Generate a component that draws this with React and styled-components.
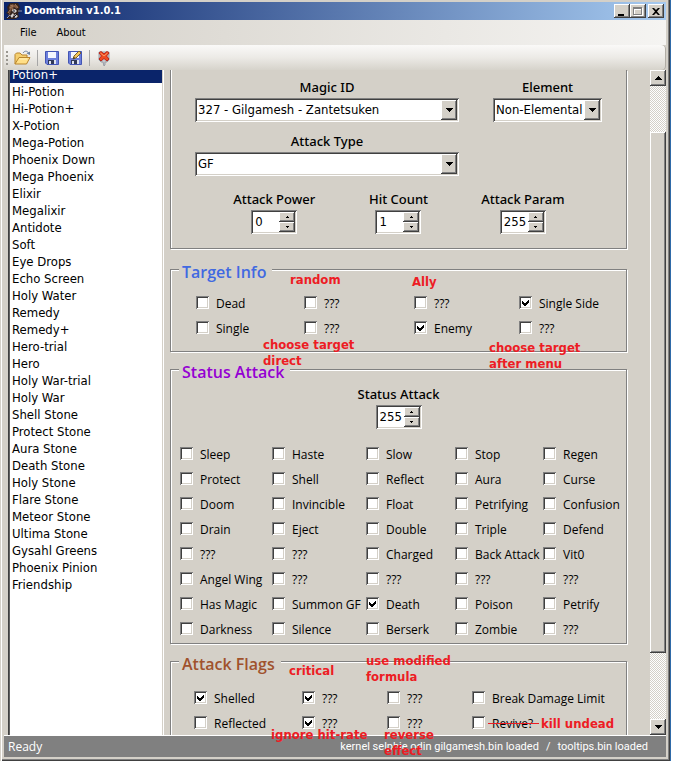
import React, { useState } from "react";
import styled, { createGlobalStyle, css } from "styled-components";

const face = "#d4d0c8";
const sunken = css`
  box-shadow: inset 1px 1px #808080, inset -1px -1px #fff, inset 2px 2px #404040, inset -2px -2px ${face};
`;
const raised = css`
  background: ${face};
  box-shadow: inset -1px -1px #404040, inset 1px 1px #fff, inset -2px -2px #808080;
`;
const labelFont = `"Open Sans", "Noto Sans", sans-serif`;
const fieldFont = `"DejaVu Sans Condensed", "DejaVu Sans", sans-serif`;

const GlobalStyle = createGlobalStyle`
  * { box-sizing: border-box; }
  body { margin: 0; background: #fff; color: #000; font: 12px/18px ${labelFont}; }
  button, input, select { font: inherit; color: inherit; border: 0; padding: 0; margin: 0; border-radius: 0; }
`;

const Page = styled.div`
  position: relative;
  display: flex;
  height: 100vh;
  min-height: 400px;
  padding: 0 5px 5px 0;
  overflow: hidden;
`;
const Window = styled.div`
  flex: 1;
  min-width: 0;
  display: flex;
  flex-direction: column;
  padding: 2px 4px 4px 4px;
  background: ${face};
  border-right: 1px solid #2f6aa8;
  box-shadow: inset 1px 0 ${face}, inset 2px 0 #fff, inset -1px -1px #404040, inset -2px -2px #808080;
`;
const TitleBar = styled.header`
  display: flex;
  align-items: center;
  height: 18px;
  padding: 0 2px;
  flex: none;
  background: linear-gradient(90deg, #0a246a, #a6caf0);
`;
const Title = styled.h1`
  flex: 1;
  margin: 0 0 0 2px;
  color: #fff;
  font: bold 11px/18px ${fieldFont};
`;
const CaptionButton = styled.button`
  ${raised}
  display: grid;
  place-items: center;
  width: 16px;
  height: 14px;
  margin-left: ${(p) => (p.$apart ? "2px" : "0")};
`;
const MenuBar = styled.nav`
  display: flex;
  align-items: center;
  gap: 20px;
  height: 25px;
  padding: 0 16px;
  flex: none;
  background: linear-gradient(90deg, ${face}, #f5f4f2);
`;
const MenuItem = styled.button`
  background: none;
  font: 11px/22px ${fieldFont};
`;
const ToolBar = styled.div`
  display: flex;
  align-items: center;
  height: 25px;
  padding: 0 2px;
  flex: none;
  border-radius: 0 4px 4px 4px;
  background: linear-gradient(#faf9f8, #eceae6 50%, #d6d3cb);
  box-shadow: inset -1px 0 #b0aca4;
`;
const Grip = styled.span`
  width: 2px;
  height: 14px;
  margin-right: 3px;
  background: repeating-linear-gradient(#9a9790 0 2px, transparent 2px 4px);
`;
const ToolButton = styled.button`
  display: grid;
  place-items: center;
  width: 23px;
  height: 22px;
  background: none;
`;
const ToolSeparator = styled.span`
  width: 1px;
  height: 16px;
  margin: 0 2px 0 3px;
  background: #a6a6a6;
`;
const Body = styled.div`
  flex: 1;
  min-height: 0;
  display: flex;
  overflow: hidden;
  border-bottom: 1px solid #fff;
`;
const ListFrame = styled.div`
  flex: none;
  width: 156px;
  margin: 0 6px 0 4px;
  overflow: hidden;
  background: #fff;
  border-left: 1px solid #404040;
  border-right: 1px solid #fff;
  box-shadow: inset 1px 0 #606060, inset -1px 0 ${face};
`;
const List = styled.ul`
  list-style: none;
  margin: -4px 1px 0;
  padding: 0;
  font: 13px/17px ${fieldFont};
`;
const Item = styled.li`
  padding-left: 2px;
  cursor: default;
  color: ${(p) => (p.$selected ? "#fff" : "#000")};
  background: ${(p) => (p.$selected ? "#0a246a" : "#fff")};
`;
const Content = styled.main`
  flex: 1;
  min-width: 0;
  display: flex;
  flex-direction: column;
  gap: 6px;
  padding-right: 23px;
  overflow: hidden;
`;
const etched = css`
  flex: none;
  min-width: 0;
  margin: 0;
  border: 1px solid #808080;
  box-shadow: inset 1px 1px #fff, 1px 1px #fff;
`;
const AttackPanel = styled.section`
  ${etched}
  border-top: 0;
  box-shadow: inset 1px 0 #fff, 1px 1px #fff;
  display: flex;
  flex-direction: column;
  padding: 8px 24px 14px;
  margin-bottom: 3px;
`;
const Group = styled.fieldset`
  ${etched}
  padding: 0;
`;
const Legend = styled.legend`
  margin-left: 8px;
  padding: 5px 6px 0 3px;
  background: ${face};
  color: ${(p) => p.$color};
  font: 600 16px/18px ${labelFont};
`;
const FieldRow = styled.div`
  display: grid;
  grid-template-columns: 264fr 109fr;
  column-gap: 34px;
  margin-bottom: 10px;
`;
const NumberRow = styled.div`
  display: grid;
  grid-template-columns: repeat(3, 1fr);
  padding: 4px 17px 0;
`;
const StatusField = styled.div`
  padding: 4px 0 13px;
`;
const Field = styled.label`
  display: flex;
  flex-direction: column;
  align-items: center;
  gap: 2px;
  font: 500 13px/18px "Noto Sans", ${labelFont};
`;
const ComboBox = styled.span`
  ${sunken}
  position: relative;
  display: block;
  width: 100%;
  height: 24px;
  padding: 2px;
  background: #fff;
`;
const Select = styled.select`
  appearance: none;
  display: block;
  width: 100%;
  height: 20px;
  padding: 0 17px 0 1px;
  background: #fff;
  font: 13px/20px ${fieldFont};
  outline: 0;
`;
const ComboArrow = styled.span`
  ${raised}
  position: absolute;
  top: 2px;
  right: 2px;
  width: 16px;
  height: 20px;
  display: grid;
  place-items: center;
  pointer-events: none;
`;
const Spinner = styled.span`
  ${sunken}
  display: flex;
  width: 46px;
  height: 24px;
  padding: 2px;
  background: #fff;
`;
const SpinInput = styled.input`
  appearance: textfield;
  flex: 1;
  min-width: 0;
  padding-left: 2px;
  background: none;
  outline: 0;
  font: 13px/20px ${fieldFont};
  &::-webkit-inner-spin-button { appearance: none; margin: 0; }
`;
const SpinButtons = styled.span`
  display: grid;
  grid-template-rows: 1fr 1fr;
  width: 16px;
`;
const SpinButton = styled.button`
  ${raised}
  display: grid;
  place-items: center;
`;
const CheckGrid = styled.div`
  display: grid;
  grid-template-columns: ${(p) => p.$columns};
  grid-auto-rows: 25px;
  padding: ${(p) => p.$padding};
`;
const CheckLabel = styled.label`
  display: flex;
  align-items: center;
  gap: 7px;
  min-width: 0;
  white-space: nowrap;
`;
const CheckMark = styled.svg`
  grid-area: 1 / 1;
  visibility: hidden;
  pointer-events: none;
`;
const CheckBoxFrame = styled.span`
  display: grid;
  place-items: center;
  flex: none;
  margin-bottom: 2px;
`;
const CheckInput = styled.input`
  ${sunken}
  appearance: none;
  grid-area: 1 / 1;
  width: 13px;
  height: 13px;
  background: #fff;
  &:checked + ${CheckMark} { visibility: visible; }
`;
const ScrollBar = styled.div`
  flex: none;
  display: flex;
  flex-direction: column;
  width: 16px;
  background: repeating-conic-gradient(#fff 0 25%, ${face} 0 50%) 0 0 / 2px 2px;
`;
const ScrollButton = styled.button`
  ${raised}
  display: grid;
  place-items: center;
  height: 16px;
  flex: none;
`;
const ScrollSpace = styled.span`
  flex: ${(p) => p.$share} 0 0;
`;
const ScrollThumb = styled.span`
  ${raised}
  flex: 521 0 0;
`;
const StatusBar = styled.footer`
  display: flex;
  align-items: center;
  gap: 7px;
  height: 21px;
  padding: 0 18px 0 4px;
  flex: none;
  background: #808080;
  color: #fff;
  font: 11px/20px Roboto, ${labelFont};
`;
const Ready = styled.span`
  flex: 1;
  font: 12px/20px ${labelFont};
`;
const Note = styled.span`
  position: absolute;
  left: ${(p) => p.$x}px;
  top: ${(p) => p.$y}px;
  white-space: pre;
  pointer-events: none;
  color: #ed1c24;
  font: bold 13px/16px ${fieldFont};
`;
const Strike = styled.span`
  position: absolute;
  left: 488px;
  top: 723px;
  width: 51px;
  height: 1px;
  background: #ed1c24;
`;

const Triangle = ({ up, small }) => {
  const w = small ? 3 : 7;
  const h = small ? 2 : 4;
  return (
    <svg width={w} height={h} viewBox={`0 0 ${w} ${h}`} shapeRendering="crispEdges" aria-hidden="true">
      <path d={up ? `M0 ${h}H${w}L${w / 2} 0Z` : `M0 0H${w}L${w / 2} ${h}Z`} />
    </svg>
  );
};

const AppIcon = () => (
  <svg width="16" height="16" viewBox="0 0 16 16" aria-hidden="true">
    <path d="M1 4L4 0H12L14 4L13 7L15 8L12 10L13 14L9 16H0L3 12L0 10L2 8Z" fill="#33221c" />
    <path d="M3 4L6 1L9 2L12 3L11 6L8 4L5 7L4 11L2 13L4 8Z" fill="#80563f" />
    <path d="M4 2L7 3L4 5M9 1L12 5M2 10L4 7M7 5L6 8" stroke="#a57a58" fill="none" />
    <path d="M6 7L9 6L11 8L9 10L7 9ZM4 13L7 10L8 12L6 15ZM9 11L12 13L10 15L8 14Z" fill="#d5d1d1" />
    <path d="M7 8H9M11 11L8 14M3 12L5 15" stroke="#151a2d" fill="none" />
    <path d="M12 8H16M1 15L4 12" stroke="#8996b7" fill="none" />
  </svg>
);
const OpenIcon = () => (
  <svg width="18" height="16" viewBox="0 0 18 16" aria-hidden="true">
    <path d="M1 14V4.500L2.500 3H6L8 5H13V8" fill="#f4cf70" stroke="#b9852d" />
    <path d="M1 14L5 7.500H16L12.500 14Z" fill="#ffdf87" stroke="#b9852d" />
    <path d="M5.500 9H13" stroke="#fff2bd" />
    <path d="M9 3C11 0 14 1 15 4" fill="none" stroke="#6d83a0" />
    <path d="M12.500 3.500L16 5V1.500Z" fill="#6d83a0" />
  </svg>
);
const SaveIcon = ({ edit }) => (
  <svg width="16" height="16" viewBox="0 0 16 16" aria-hidden="true">
    <path d="M1.500 1.500H14.500V14.500H3L1.500 13Z" fill="#6c7fdc" stroke="#4355b4" />
    <path d="M4 2H12V8H4Z" fill="#f4f7ff" />
    <path d="M4 10H12V14H4Z" fill="#303958" />
    <path d="M5 11H7V14H5ZM10 10H12V14H10Z" fill="#dfe3ef" />
    {edit && (
      <>
        <path d="M6 9L7 6L12 1L14 3L9 8Z" fill="#f4c75b" stroke="#79602d" />
        <path d="M6 9L7 7L8 8Z" fill="#222" />
      </>
    )}
  </svg>
);
const CloseFileIcon = () => (
  <svg width="16" height="16" viewBox="0 0 16 16" aria-hidden="true">
    <path d="M3 2H13V10L11 12H9V15L8 16L7 12H5L3 10Z" fill="#c4c7cd" stroke="#999da5" />
    <path d="M3 3L5 1.500L8 4L11 1.500L13 3L10.500 6L13 9L11 11L8 8.500L5 11L3 9L5.500 6Z" fill="#ef4b21" stroke="#bd2418" />
    <path d="M4.500 3L8 6L11.500 3" fill="none" stroke="#ff9a64" />
  </svg>
);

const Check = ({ text, on }) => (
  <CheckLabel>
    <CheckBoxFrame>
      <CheckInput type="checkbox" defaultChecked={on} />
      <CheckMark width="7" height="7" viewBox="0 0 7 7" shapeRendering="crispEdges">
        <path d="M0 2V5L2 7H3L7 3V0L3 4H2Z" />
      </CheckMark>
    </CheckBoxFrame>
    {text}
  </CheckLabel>
);
const Checks = ({ items, ...rest }) => (
  <CheckGrid {...rest}>
    {items.map((name, i) => (
      <Check key={i} text={name.replace("*", "")} on={name.startsWith("*")} />
    ))}
  </CheckGrid>
);
const Combo = ({ label, value }) => (
  <Field>
    {label}
    <ComboBox>
      <Select defaultValue={value}>
        <option>{value}</option>
      </Select>
      <ComboArrow>
        <Triangle />
      </ComboArrow>
    </ComboBox>
  </Field>
);
const NumberField = ({ label, initial, id }) => {
  const [value, setValue] = useState(initial);
  const step = (d) => setValue((v) => Math.min(255, Math.max(0, Number(v) + d)));
  return (
    <Field as="div">
      <label htmlFor={id}>{label}</label>
      <Spinner>
        <SpinInput id={id} type="number" value={value} onChange={(e) => setValue(e.target.value)} />
        <SpinButtons>
          <SpinButton aria-label={`Increase ${label}`} onClick={() => step(1)}>
            <Triangle up small />
          </SpinButton>
          <SpinButton aria-label={`Decrease ${label}`} onClick={() => step(-1)}>
            <Triangle small />
          </SpinButton>
        </SpinButtons>
      </Spinner>
    </Field>
  );
};

const items = [
  "Potion+", "Hi-Potion", "Hi-Potion+", "X-Potion", "Mega-Potion", "Phoenix Down", "Mega Phoenix", "Elixir",
  "Megalixir", "Antidote", "Soft", "Eye Drops", "Echo Screen", "Holy Water", "Remedy", "Remedy+", "Hero-trial",
  "Hero", "Holy War-trial", "Holy War", "Shell Stone", "Protect Stone", "Aura Stone", "Death Stone", "Holy Stone",
  "Flare Stone", "Meteor Stone", "Ultima Stone", "Gysahl Greens", "Phoenix Pinion", "Friendship",
];
// A leading asterisk marks a box that starts ticked.
const targets = ["Dead", "???", "???", "*Single Side", "Single", "???", "*Enemy", "???"];
const statuses = [
  "Sleep", "Haste", "Slow", "Stop", "Regen",
  "Protect", "Shell", "Reflect", "Aura", "Curse",
  "Doom", "Invincible", "Float", "Petrifying", "Confusion",
  "Drain", "Eject", "Double", "Triple", "Defend",
  "???", "???", "Charged", "Back Attack", "Vit0",
  "Angel Wing", "???", "???", "???", "???",
  "Has Magic", "Summon GF", "*Death", "Poison", "Petrify",
  "Darkness", "Silence", "Berserk", "Zombie", "???",
];
const flags = ["*Shelled", "*???", "???", "Break Damage Limit", "Reflected", "*???", "???", "Revive?"];
const notes = [
  [290, 272, "random"],
  [412, 274, "Ally"],
  [263, 337, "choose target\ndirect"],
  [489, 340, "choose target\nafter menu"],
  [289, 663, "critical"],
  [366, 653, "use modified\nformula"],
  [271, 727, "ignore hit-rate"],
  [384, 727, "reverse\neffect"],
  [541, 716, "kill undead"],
];

export default function App() {
  const [selected, setSelected] = useState("Potion+");
  return (
    <Page>
      <GlobalStyle />
      <Window>
        <TitleBar>
          <AppIcon />
          <Title>Doomtrain v1.0.1</Title>
          <CaptionButton aria-label="Minimize">
            <svg width="10" height="9" viewBox="0 0 10 9"><path d="M1 7H7V9H1Z" /></svg>
          </CaptionButton>
          <CaptionButton aria-label="Maximize">
            <svg width="10" height="9" viewBox="0 0 10 9" shapeRendering="crispEdges">
              <path d="M1 1H10V9H1ZM2 3V8H9V3Z" fill="#fff" fillRule="evenodd" />
              <path d="M0 0H9V8H0ZM1 2V7H8V2Z" fill="#808080" fillRule="evenodd" />
            </svg>
          </CaptionButton>
          <CaptionButton $apart aria-label="Close">
            <svg width="8" height="7" viewBox="0 0 8 7"><path d="M0 0H2L4 2L6 0H8L5 3.500L8 7H6L4 5L2 7H0L3 3.500Z" /></svg>
          </CaptionButton>
        </TitleBar>
        <MenuBar>
          <MenuItem>File</MenuItem>
          <MenuItem>About</MenuItem>
        </MenuBar>
        <ToolBar>
          <Grip />
          <ToolButton aria-label="Open"><OpenIcon /></ToolButton>
          <ToolSeparator />
          <ToolButton aria-label="Save"><SaveIcon /></ToolButton>
          <ToolButton aria-label="Save as"><SaveIcon edit /></ToolButton>
          <ToolSeparator />
          <ToolButton aria-label="Close file"><CloseFileIcon /></ToolButton>
        </ToolBar>
        <Body>
          <ListFrame>
            <List role="listbox" aria-label="Items">
              {items.map((name) => (
                <Item
                  key={name}
                  role="option"
                  aria-selected={name === selected}
                  $selected={name === selected}
                  onClick={() => setSelected(name)}
                >
                  {name}
                </Item>
              ))}
            </List>
          </ListFrame>
          <Content>
            <AttackPanel>
              <FieldRow>
                <Combo label="Magic ID" value="327 - Gilgamesh - Zantetsuken" />
                <Combo label="Element" value="Non-Elemental" />
              </FieldRow>
              <FieldRow>
                <Combo label="Attack Type" value="GF" />
              </FieldRow>
              <NumberRow>
                <NumberField id="attack-power" label="Attack Power" initial={0} />
                <NumberField id="hit-count" label="Hit Count" initial={1} />
                <NumberField id="attack-param" label="Attack Param" initial={255} />
              </NumberRow>
            </AttackPanel>
            <Group>
              <Legend $color="#4169e1">Target Info</Legend>
              <Checks items={targets} $columns="108fr 110fr 105fr 107fr" $padding="10px 0 10px 25px" />
            </Group>
            <Group>
              <Legend $color="#9400d3">Status Attack</Legend>
              <StatusField>
                <NumberField id="status-attack" label="Status Attack" initial={255} />
              </StatusField>
              <Checks items={statuses} $columns="92fr 94fr 89fr 88fr 83fr" $padding="0 0 1px 9px" />
            </Group>
            <Group>
              <Legend $color="#a0522d">Attack Flags</Legend>
              <Checks items={flags} $columns="108fr 85fr 85fr 154fr" $padding="13px 0 12px 23px" />
            </Group>
          </Content>
          <ScrollBar>
            <ScrollButton aria-label="Scroll up"><Triangle up /></ScrollButton>
            <ScrollSpace $share={46} />
            <ScrollThumb />
            <ScrollSpace $share={66} />
            <ScrollButton aria-label="Scroll down"><Triangle /></ScrollButton>
          </ScrollBar>
        </Body>
        <StatusBar>
          <Ready>Ready</Ready>
          <span>kernel selphie odin gilgamesh.bin loaded</span>
          <span>/</span>
          <span>tooltips.bin loaded</span>
        </StatusBar>
      </Window>
      {notes.map(([x, y, text]) => (
        <Note key={`${x}-${y}`} $x={x} $y={y}>{text}</Note>
      ))}
      <Strike />
    </Page>
  );
}
